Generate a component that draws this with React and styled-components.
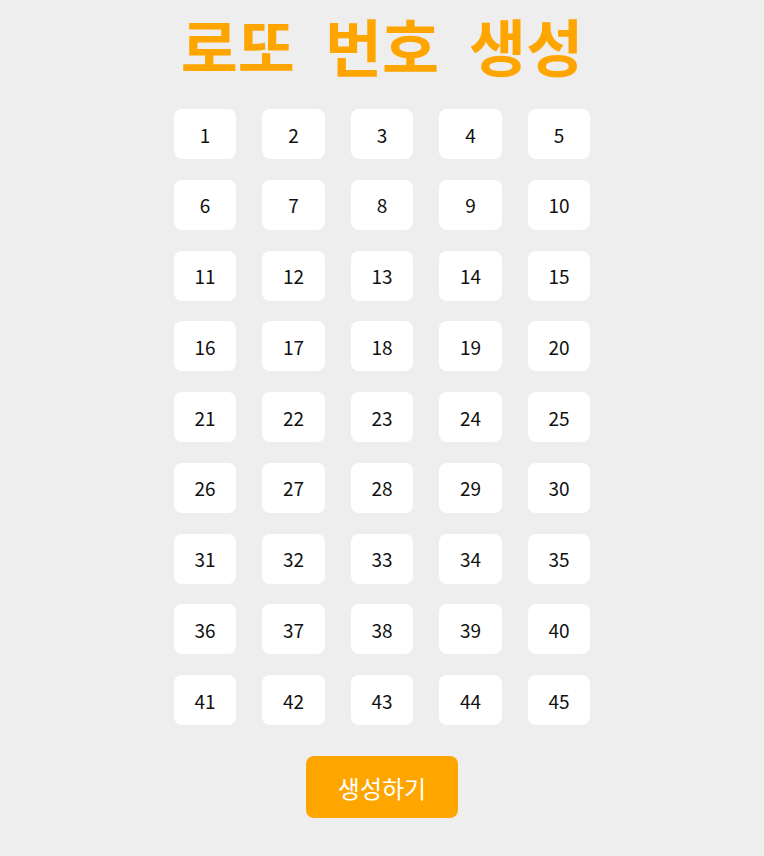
import React from 'react'
import styled, { createGlobalStyle } from 'styled-components'

const GlobalStyle = createGlobalStyle`
  body {
    margin: 0;
    background: #eeeeee;
    font-family: "Noto Sans CJK KR", "Noto Sans", sans-serif;
  }
`

const Page = styled.div`
  display: flex;
  flex-direction: column;
  align-items: center;
  padding-top: 1px;
`

const Title = styled.h1`
  margin: 0;
  color: #ffa500;
  font-size: 62px;
  font-weight: 700;
  line-height: 89px;
  word-spacing: 16px;
`

const Grid = styled.div`
  display: grid;
  grid-template-columns: repeat(5, 62.5px);
  column-gap: 26px;
  row-gap: 20.75px;
  margin-top: 19px;
`

const Ball = styled.div`
  display: flex;
  align-items: center;
  justify-content: center;
  height: 50px;
  background: #ffffff;
  border-radius: 8px;
  color: #111111;
  font-size: 19px;
`

const GenerateButton = styled.button`
  margin-top: 31px;
  width: 152px;
  height: 62px;
  border: none;
  border-radius: 8px;
  background: #ffa500;
  color: #ffffff;
  font-family: "Noto Sans CJK KR", "Noto Sans", sans-serif;
  font-size: 24px;
  cursor: pointer;
`

const numbers = Array.from({ length: 45 }, (_, i) => i + 1)

export default function App() {
  return (
    <Page>
      <GlobalStyle />
      <Title>로또 번호 생성</Title>
      <Grid>
        {numbers.map(n => (
          <Ball key={n}>{n}</Ball>
        ))}
      </Grid>
      <GenerateButton>생성하기</GenerateButton>
    </Page>
  )
}
